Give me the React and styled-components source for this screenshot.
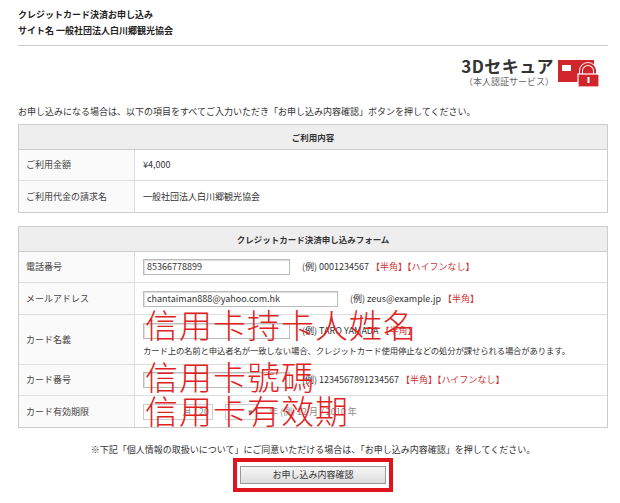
import React from "react";
import styled, { createGlobalStyle } from "styled-components";

const G = createGlobalStyle`
  body{margin:0;background:#fff;font-family:"Noto Sans CJK JP","Noto Sans",sans-serif;color:#333;font-size:9px;line-height:12px;}
`;
const Page = styled.div`width:620px;height:503px;padding:0 12px 0 18px;box-sizing:border-box;position:relative;overflow:hidden;`;
const Head = styled.div`padding-top:7px;font-weight:bold;font-size:9px;line-height:16px;color:#222;`;
const Hr = styled.div`height:1px;background:#ccc;margin:6px 0 0 0;`;
const LogoRow = styled.div`display:flex;justify-content:flex-end;align-items:center;gap:4px;margin-top:8px;height:36px;padding-right:8px;`;
const LogoText = styled.div`text-align:right;`;
const Big = styled.div`font-size:17px;font-weight:bold;color:#333;line-height:20px;letter-spacing:0.5px;`;
const Small = styled.div`font-size:9px;color:#666;line-height:12px;`;
const Intro = styled.div`margin-top:16px;font-size:9px;line-height:12px;`;
const Table = styled.div`border:1px solid #ccc;margin-top:${p=>p.mt}px;`;
const TH = styled.div`background:#eee;height:${p=>p.h}px;display:flex;align-items:center;justify-content:center;font-weight:bold;font-size:8.5px;border-bottom:1px solid #ccc;`;
const Row = styled.div`display:grid;grid-template-columns:116px 1fr;height:${p=>p.h}px;border-top:${p=>p.first?"none":"1px solid #ddd"};box-sizing:border-box;`;
const Label = styled.div`background:#fafafa;border-right:1px solid #ddd;display:flex;align-items:center;padding-left:7px;font-size:9px;color:#444;`;
const Cell = styled.div`display:flex;flex-direction:column;justify-content:center;padding-left:8px;gap:5px;font-size:9px;overflow:hidden;`;
const Line = styled.div`display:flex;align-items:center;gap:12px;white-space:nowrap;`;
const Input = styled.div`width:${p=>p.w}px;height:16px;border:1px solid #bbb;box-shadow:inset 1px 1px 1px #ddd;display:flex;align-items:center;padding-left:3px;box-sizing:border-box;font-size:9px;color:#333;flex:none;`;
const Red = styled.span`color:#c33;`;
const Desc = styled.div`white-space:nowrap;font-size:8.4px;letter-spacing:-0.15px;`;
const Note = styled.div`text-align:center;margin-top:16px;font-size:9px;`;
const BtnWrap = styled.div`display:flex;justify-content:center;margin-top:2px;`;
const Frame = styled.div`border:4px solid #e0141c;padding:4px 3px;`;
const Button = styled.div`width:144px;height:16px;border:1px solid #999;background:linear-gradient(#f6f6f6,#ddd);display:flex;align-items:center;justify-content:center;font-size:9px;`;
const Over = styled.div`position:absolute;left:145px;top:${p=>p.t}px;color:#e0231f;font-size:33px;line-height:36px;letter-spacing:1px;pointer-events:none;font-family:"Noto Sans CJK TC",sans-serif;font-weight:300;white-space:nowrap;`;
const Sel = styled.div`width:${p=>p.w}px;height:16px;border:1px solid #ccc;color:#888;display:flex;align-items:center;justify-content:flex-end;padding-right:3px;box-sizing:border-box;flex:none;`;

export default function App(){
  return <><G/><Page>
    <Head>クレジットカード決済お申し込み<br/>サイト名 一般社団法人白川郷観光協会</Head>
    <Hr/>
    <LogoRow>
      <LogoText><Big>3Dセキュア</Big><Small>（本人認証サービス）</Small></LogoText>
      <svg width="42" height="30" viewBox="0 0 42 30">
        <rect x="0" y="3" width="36" height="22" fill="#d0262b"/>
        <rect x="4" y="8" width="9" height="6" fill="#fff"/>
        <path d="M23 19v-5a7 7 0 0 1 14 0v5" fill="none" stroke="#fff" strokeWidth="4"/>
        <path d="M23 19v-5a7 7 0 0 1 14 0v5" fill="none" stroke="#d0262b" strokeWidth="2"/>
        <rect x="20" y="17" width="21" height="13" fill="#d0262b" stroke="#fff" strokeWidth="1.2"/>
        <rect x="29.5" y="20" width="2" height="6" fill="#fff"/>
      </svg>
    </LogoRow>
    <Intro>お申し込みになる場合は、以下の項目をすべてご入力いただき「お申し込み内容確認」ボタンを押してください。</Intro>
    <Table mt={6}>
      <TH h={24}>ご利用内容</TH>
      <Row h={30} first><Label>ご利用金額</Label><Cell>¥4,000</Cell></Row>
      <Row h={32}><Label>ご利用代金の請求名</Label><Cell>一般社団法人白川郷観光協会</Cell></Row>
    </Table>
    <Table mt={13}>
      <TH h={24}>クレジットカード決済申し込みフォーム</TH>
      <Row h={30} first><Label>電話番号</Label><Cell><Line><Input w={147}>85366778899</Input><span>(例) 0001234567 <Red>【半角】【ハイフンなし】</Red></span></Line></Cell></Row>
      <Row h={32}><Label>メールアドレス</Label><Cell><Line><Input w={195}>chantaiman888@yahoo.com.hk</Input><span>(例) zeus@example.jp <Red>【半角】</Red></span></Line></Cell></Row>
      <Row h={50}><Label>カード名義</Label><Cell><Line><Input w={147}/><span>(例) TARO YAMADA <Red>【半角】</Red></span></Line><Desc>カード上の名前と申込者名が一致しない場合、クレジットカード使用停止などの処分が課せられる場合があります。</Desc></Cell></Row>
      <Row h={31}><Label>カード番号</Label><Cell><Line><Input w={147}/><span>(例) 1234567891234567 <Red>【半角】【ハイフンなし】</Red></span></Line></Cell></Row>
      <Row h={32}><Label>カード有効期限</Label><Cell><Line><Sel w={70}>月 / 20</Sel><Sel w={32}>▾</Sel><span style={{color:"#888"}}>年 (例) 12 月 / 2010 年</span></Line></Cell></Row>
    </Table>
    <Note>※下記「個人情報の取扱いについて」にご同意いただける場合は、「お申し込み内容確認」を押してください。</Note>
    <BtnWrap><Frame><Button>お申し込み内容確認</Button></Frame></BtnWrap>
    <Over t={306}>信用卡持卡人姓名</Over>
    <Over t={358}>信用卡號碼</Over>
    <Over t={392}>信用卡有效期</Over>
  </Page></>;
}
